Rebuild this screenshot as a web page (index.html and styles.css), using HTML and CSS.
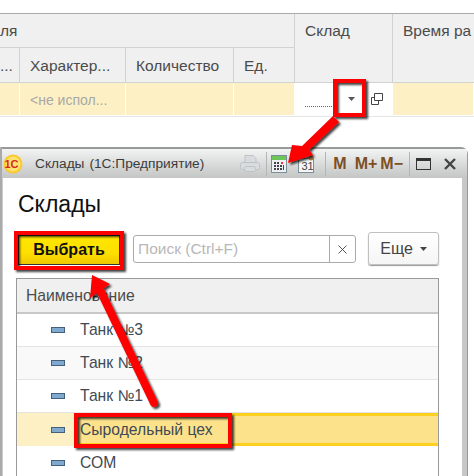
FILE: index.html
```html
<!DOCTYPE html>
<html lang="ru">
<head>
<meta charset="utf-8">
<title>Склады</title>
<link rel="stylesheet" href="styles.css">
</head>
<body>
<div class="page">
  <section class="doc">
    <div class="doc-grid">
      <div class="hd group">ля</div>
      <div class="hd sklad">Склад</div>
      <div class="hd time">Время ра</div>
      <div class="hd sub c1">...</div>
      <div class="hd sub">Характер...</div>
      <div class="hd sub">Количество</div>
      <div class="hd sub">Ед.</div>
      <div class="cell"></div>
      <div class="cell muted">&lt;не испол...</div>
      <div class="cell"></div>
      <div class="cell"></div>
      <div class="cell edit">
        <span class="dots"></span>
        <svg class="caret" width="7" height="4" viewBox="0 0 7 4"><path d="M0 0h7L3.500 4z" fill="#555"/></svg>
        <svg class="open" width="12" height="12" viewBox="0 0 12 12" fill="none" stroke="#444"><path d="M3.500.5h8v7h-8z"/><path d="M3.500 4.500H.5v7h7v-4"/></svg>
      </div>
      <div class="cell"></div>
    </div>
  </section>

  <section class="win">
    <header class="titlebar">
      <svg class="logo" width="20" height="20" viewBox="0 0 20 20"><circle cx="10" cy="10" r="9.500" fill="#fbc92e"/><circle cx="10" cy="10" r="7.500" fill="#fde36e"/><text x="1.500" y="14" class="logo-t">1С</text></svg>
      <span class="win-title">Склады</span>
      <span class="win-title sub-title">(1С:Предприятие)</span>
      <div class="tools">
        <svg class="printer" width="20" height="18" viewBox="0 0 20 18" fill="#d8dcdf" stroke="#bcc3c8"><path d="M5 .5h8l3 3v5H5z"/><rect x=".5" y="7.500" width="19" height="7" rx="2"/><rect x="4.500" y="11.500" width="11" height="5" rx="2"/></svg>
        <i class="sep"></i>
        <svg class="calc" width="16" height="18" viewBox="0 0 16 18"><rect x=".5" y=".5" width="15" height="17" fill="#eef1f3" stroke="#7d8e96"/><rect x="1" y="1" width="14" height="4" fill="#6cc65a"/><path d="M3 7h2v2H3zM6 7h2v2H6zM3 10h2v2H3zM6 10h2v2H6zM9 10h2v2H9zM3 13h2v2H3zM6 13h2v2H6zM9 13h2v2H9zM12 10h1v5h-1z" fill="#444"/><rect x="10" y="7" width="2" height="2" fill="#e33"/></svg>
        <svg class="cal" width="16" height="18" viewBox="0 0 16 18"><rect x=".5" y="3.500" width="15" height="14" fill="#f4f6f7" stroke="#7d8e96"/><circle cx="13" cy="3" r="2.500" fill="#b5824f"/><text x="3.500" y="15" class="cal-t">31</text></svg>
        <i class="sep"></i>
        <span class="mem">M</span><span class="mem mp">M+</span><span class="mem mm">M−</span>
        <i class="sep"></i>
        <span class="max"></span>
        <svg class="close" width="12" height="12" viewBox="0 0 12 12"><path d="M1 1l10 10M11 1L1 11" stroke="#444" stroke-width="2.400"/></svg>
      </div>
    </header>
    <div class="win-body">
      <h1 class="heading">Склады</h1>
      <div class="toolbar">
        <button class="pick">Выбрать</button>
        <div class="search">
          <span class="ph">Поиск (Ctrl+F)</span>
          <span class="clear"><svg width="9" height="9" viewBox="0 0 9 9"><path d="M.5.500l8 8M8.500.5l-8 8" stroke="#555"/></svg></span>
        </div>
        <button class="more">Еще<svg width="7" height="4" viewBox="0 0 7 4"><path d="M0 0h7L3.500 4z" fill="#444"/></svg></button>
      </div>
      <div class="list">
        <div class="list-head">Наименование</div>
        <div class="row"><i class="dash"></i>Танк №3</div>
        <div class="row alt"><i class="dash"></i>Танк №2</div>
        <div class="row"><i class="dash"></i>Танк №1</div>
        <div class="row selected"><i class="dash"></i><span class="sel-text">Сыродельный цех</span></div>
        <div class="row last"><i class="dash"></i>СОМ</div>
      </div>
    </div>
  </section>

  <svg class="marks" width="474" height="476" viewBox="0 0 474 476">
    <defs>
      <filter id="sh" x="-20%" y="-20%" width="140%" height="140%"><feDropShadow dx="2" dy="2" stdDeviation="1.200" flood-color="#000" flood-opacity=".75"/></filter>
    </defs>
    <g filter="url(#sh)" fill="none" stroke="#f00" stroke-width="4">
      <rect x="335" y="81" width="29" height="34"/>
      <rect x="16" y="233" width="106" height="35"/>
      <rect x="76" y="415" width="154" height="31"/>
    </g>
    <g filter="url(#sh)">
      <path d="M333 116L339 122L309 150L313 155L288 163L292 145L302 146z" fill="#f00"/>
      <path d="M154 403L101 292" stroke="#f00" stroke-width="8" stroke-linecap="round"/>
      <path d="M92 275L110 284L90 298z" fill="#f00"/>
    </g>
  </svg>
</div>
</body>
</html>
```
FILE: styles.css
```css
* { box-sizing: border-box; }
html, body { margin: 0; padding: 0; background: #fff; }
body { font-family: "Liberation Sans", Arial, sans-serif; }
.page { position: relative; width: 474px; height: 476px; overflow: hidden; }

.doc { padding-top: 13px; height: 147px; }
.doc-grid {
  display: grid;
  grid-template-columns: 20px 106px 108px 61px 98px 1fr;
  grid-template-rows: 34px 35px 33px;
  border-top: 1px solid #aaa;
  border-bottom: 1px solid #e6e6e6;
  width: 474px;
  font-size: 15.5px;
  color: #4b4b4b;
}
.hd { background: #f0f0f0; border-right: 1px solid #d2d2d2; border-bottom: 1px solid #d2d2d2; padding: 8px 0 0 10px; white-space: nowrap; overflow: hidden; }
.group { grid-column: 1 / 5; padding-left: 0; }
.sklad { grid-column: 5; grid-row: 1 / 3; }
.time { grid-column: 6; grid-row: 1 / 3; border-right: 0; }
.sub { padding-top: 9px; }
.c1 { padding-left: 0; color: #4b4b4b; }
.cell { background: #fdf0c4; border-right: 1px solid #fff; height: 32px; }
.muted { color: #a8a8a8; font-size: 14px; padding: 9px 0 0 10px; white-space: nowrap; }
.edit { background: #fff; display: flex; align-items: center; padding-left: 10px; }
.dots { width: 29px; margin-top: 14px; border-bottom: 1px dotted #d33; }
.caret { margin: 0 0 0 14px; }
.open { margin: 0 0 0 16px; }

.win { height: 329px; border: 2px solid #999; border-bottom: 0; border-right-width: 1px; border-radius: 0 7px 0 0; width: 468px; background: #fff; display: flex; flex-direction: column; border-left-color: #aaa; }
.titlebar { height: 29px; background: linear-gradient(#f2f3f3, #d6d8d8 60%, #c4c6c6); display: flex; align-items: center; padding-left: 1px; flex: none; }
.logo { flex: none; }
.logo-t { font: bold 11px "Liberation Sans", sans-serif; fill: #d8281e; }
.cal-t { font: 11px "Liberation Sans", sans-serif; fill: #444; }
.win-title { font-size: 13.7px; color: #3c3c3c; margin-left: 12px; }
.sub-title { margin-left: 5px; }
.tools { margin-left: auto; display: flex; align-items: center; padding-right: 11px; }
.printer { margin-right: 6px; }
.sep { width: 1px; height: 24px; background: #b4b6b6; }
.calc { margin-left: 4px; }
.cal { margin: 0 11px 0 11px; }
.mem { font-weight: bold; font-size: 16px; color: #7d4f25; margin-left: 7px; }
.mp { margin-left: 8px; }
.mm { margin: 0 6px 0 3px; }
.max { width: 15px; height: 12px; border: 1px solid #333; border-top-width: 3px; margin: 0 13px 0 6px; }
.close { flex: none; }

.win-body { flex: 1; padding: 0 0 0 13px; border-right: 5px solid #c6c8c8; border-left: 1px solid #ccc; min-height: 0; }
.heading { margin: 13px 0 0 2px; font-size: 23px; font-weight: normal; color: #111; line-height: 27px; }
.toolbar { display: flex; align-items: flex-start; margin-top: 16px; height: 44px; padding-left: 2px; }
.pick { width: 102px; height: 30px; margin-top: 1px; border: 1px solid #333; background: linear-gradient(#ffe600, #ffdf00 60%, #f0c800); font: bold 16px "Liberation Sans", sans-serif; color: #111; padding: 0; }
.search { width: 223px; height: 28px; margin: 1px 0 0 13px; border: 1px solid #aaa; border-radius: 3px; display: flex; }
.ph { flex: 1; padding: 4px 0 0 4px; color: #b8b8b8; font-size: 15.5px; }
.clear { width: 26px; border-left: 1px solid #aaa; display: flex; align-items: center; justify-content: center; }
.more { width: 71px; height: 33px; margin: -2px 0 0 12px; border: 1px solid #c0c0c0; border-radius: 3px; background: linear-gradient(#fff, #f5f5f5); box-shadow: 0 1px 1px #999; font: 16px "Liberation Sans", sans-serif; color: #444; display: flex; align-items: center; justify-content: center; gap: 7px; padding: 0; }

.list { border: 1px solid #999; border-bottom: 0; width: 423px; font-size: 15.7px; color: #3e4a55; }
.list-head { height: 35px; background: #f0f0f0; border-bottom: 2px solid #c8c8c8; padding: 8px 0 0 9px; color: #4b4b4b; }
.row { height: 33px; display: flex; align-items: center; padding-left: 34px; border-bottom: 1px solid #e4e4e4; }
.alt { background: #f9f9f9; }
.selected {
  background:
    linear-gradient(#fdd020, #fdd020) 57px 0 / 100% 3px no-repeat,
    linear-gradient(#fdd020, #fdd020) 57px 100% / 100% 3px no-repeat,
    linear-gradient(90deg, #fdf0c4 57px, #fde28c 57px);
  border-bottom: 0;
}
.last { border-bottom: 0; }
.dash { width: 14px; height: 6px; background: #7fa9cf; border: 1px solid #44607a; margin-right: 15px; flex: none; }
.marks { position: absolute; left: 0; top: 0; pointer-events: none; }
```
